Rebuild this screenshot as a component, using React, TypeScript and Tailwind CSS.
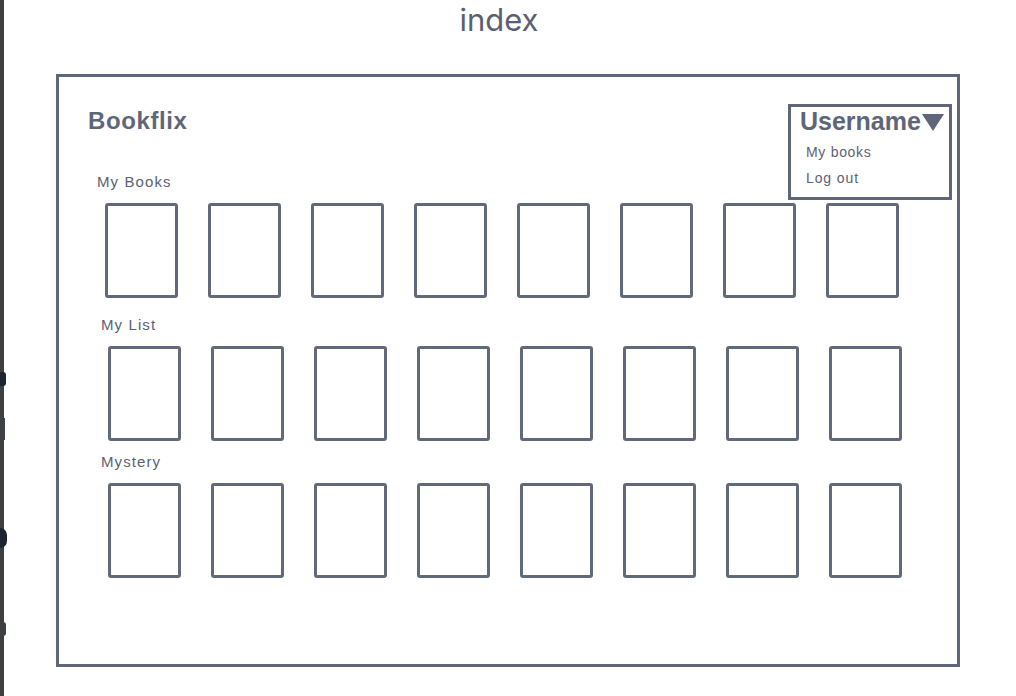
import React from 'react';

const shelves = [
  { id: 'my-books', title: 'My Books', indent: 'ml-[38px]', boxIndent: 'ml-[8px]', top: 'mt-[37px]' },
  { id: 'my-list', title: 'My List', indent: 'ml-[42px]', boxIndent: 'ml-[7px]', top: 'mt-[18px]' },
  { id: 'mystery', title: 'Mystery', indent: 'ml-[42px]', boxIndent: 'ml-[7px]', top: 'mt-[12px]' },
];

const books = [1, 2, 3, 4, 5, 6, 7, 8];

function Shelf({ title, indent, boxIndent, top }: { title: string; indent: string; boxIndent: string; top: string }) {
  return (
    <div className={`${indent} ${top} flex flex-col`}>
      <div className="h-[18px] text-[15px] leading-[18px] tracking-[1.1px] text-[#5c6272]">{title}</div>
      <div className={`${boxIndent} mt-[12px] flex gap-[30px]`}>
        {books.map((b) => (
          <div key={b} className="w-[73px] h-[95px] border-[3px] border-[#626979] rounded-[3px] bg-white" />
        ))}
      </div>
    </div>
  );
}

export default function App() {
  return (
    <div className="w-[1016px] h-[696px] bg-white flex relative overflow-hidden font-['Liberation_Sans',Arial,sans-serif]">
      {/* neighbouring panel edge, with clipped marks */}
      <div className="w-[4px] h-full bg-[#3f3f3f]" />
      <div className="absolute left-0 top-[372px] w-[6px] h-[14px] rounded-r-[3px] bg-[#1c2430]" />
      <div className="absolute left-[3px] top-[418px] w-[2px] h-[22px] bg-[#3a4250]" />
      <div className="absolute left-0 top-[528px] w-[7px] h-[20px] rounded-r-full bg-[#1c2430]" />
      <div className="absolute left-[3px] top-[622px] w-[3px] h-[14px] rounded-r-full border-r-2 border-[#3a4250]" />

      <div className="flex flex-col pl-[52px]">
        <div className="h-[74px] w-[904px] flex justify-center">
          <div className="-ml-[18px] mt-[2px] text-[31px] leading-[36px] text-[#5b6070] font-['Inter',sans-serif]">index</div>
        </div>

        <div className="relative w-[904px] h-[593px] border-[3px] border-[#5f6677] bg-white flex flex-col">
          <div className="ml-[29px] mt-[29px] h-[30px] text-[24px] leading-[30px] font-bold tracking-[0.6px] text-[#5f6677]">
            Bookflix
          </div>

          {shelves.map((s) => (
            <Shelf key={s.id} title={s.title} indent={s.indent} boxIndent={s.boxIndent} top={s.top} />
          ))}

          {/* user dropdown */}
          <div className="absolute left-[729px] top-[27px] w-[164px] h-[96px] border-[3px] border-[#5f6677] bg-white flex flex-col pl-[9px]">
            <div className="flex items-center -mt-[1px] h-[30px]">
              <span className="text-[25px] leading-[30px] font-bold text-[#5f6677]">Username</span>
              <svg width="22" height="18" viewBox="0 0 22 18" className="ml-[1px] mt-[2px]">
                <polygon points="0,1 22,1 11,18" fill="#5f6677" />
              </svg>
            </div>
            <div className="ml-[6px] mt-[8px] text-[14px] leading-[16px] tracking-[0.7px] text-[#5c6272]">My books</div>
            <div className="ml-[6px] mt-[10px] text-[14px] leading-[16px] tracking-[0.9px] text-[#5c6272]">Log out</div>
          </div>
        </div>
      </div>
    </div>
  );
}
